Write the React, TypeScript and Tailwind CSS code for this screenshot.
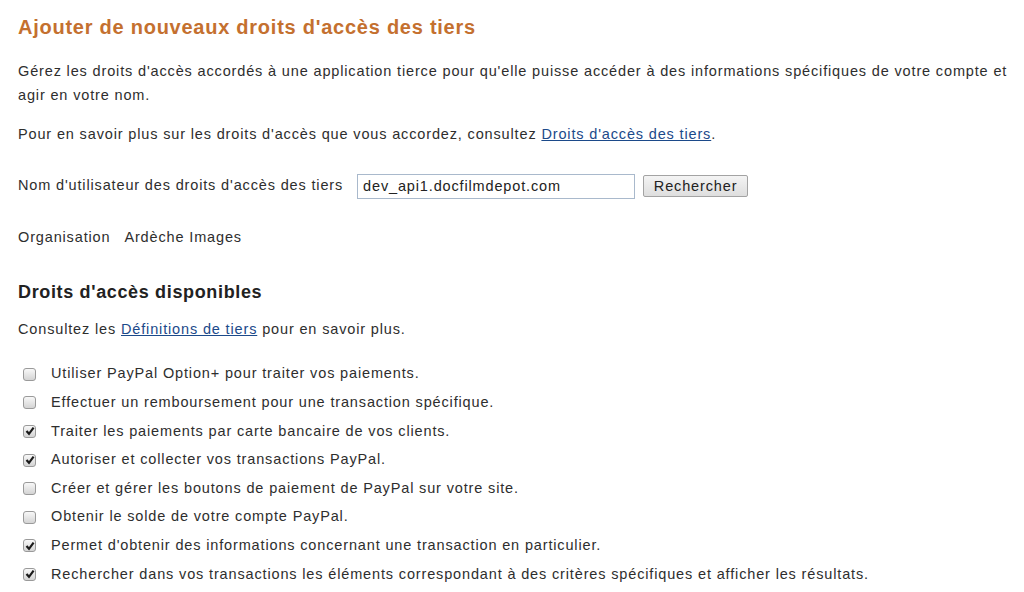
const items: [string, boolean][] = [
  ["Utiliser PayPal Option+ pour traiter vos paiements.", false],
  ["Effectuer un remboursement pour une transaction spécifique.", false],
  ["Traiter les paiements par carte bancaire de vos clients.", true],
  ["Autoriser et collecter vos transactions PayPal.", true],
  ["Créer et gérer les boutons de paiement de PayPal sur votre site.", false],
  ["Obtenir le solde de votre compte PayPal.", false],
  ["Permet d'obtenir des informations concernant une transaction en particulier.", true],
  ["Rechercher dans vos transactions les éléments correspondant à des critères spécifiques et afficher les résultats.", true],
  ["", false],
];

const CheckBox = ({ checked }: { checked: boolean }) => (
  <span className="w-[13px] h-[13px] rounded-[3px] border border-[#9a9a9a] bg-gradient-to-b from-[#f8f8f8] to-[#d4d4d4] flex items-center justify-center shrink-0">
    {checked && (
      <svg width="10" height="10" viewBox="0 0 10 10">
        <path d="M1.5 5 L4 7.8 L8.6 1.6" fill="none" stroke="#1a1a1a" strokeWidth="2.2" />
      </svg>
    )}
  </span>
);

export default function App() {
  return (
    <div className="w-[1024px] h-[592px] overflow-hidden bg-white text-[#2e2e2e] text-[14.5px] tracking-[0.85px] font-['Liberation_Sans',Arial,sans-serif] pl-[18px] pr-[4px] pt-[14px]">
      <h1 className="text-[20px] tracking-[0.75px] font-bold text-[#c4702f] leading-[26px]">
        Ajouter de nouveaux droits d'accès des tiers
      </h1>
      <p className="mt-[19px] leading-[24px]">
        Gérez les droits d'accès accordés à une application tierce pour qu'elle puisse accéder à des informations spécifiques de votre compte et agir en votre nom.
      </p>
      <p className="mt-[15px] leading-[24px]">
        Pour en savoir plus sur les droits d'accès que vous accordez, consultez{" "}
        <a className="text-[#1c4a8a] underline">Droits d'accès des tiers</a>.
      </p>
      <div className="mt-[27px] flex items-center h-[26px]">
        <span>Nom d'utilisateur des droits d'accès des tiers</span>
        <input
          className="ml-[14px] w-[278px] h-[25px] border border-[#a9b9cc] px-[5px] text-[14.5px] tracking-[0.85px] text-[#222] outline-none"
          defaultValue="dev_api1.docfilmdepot.com"
        />
        <button className="ml-[8px] w-[105px] h-[22px] border border-[#a3a3a3] rounded-[2px] bg-gradient-to-b from-[#f4f4f4] to-[#dedede] text-[14.5px] tracking-[0.85px] text-[#222]">
          Rechercher
        </button>
      </div>
      <div className="mt-[26px] flex gap-[14px] leading-[24px]">
        <span>Organisation</span>
        <span>Ardèche Images</span>
      </div>
      <h2 className="mt-[32px] text-[18px] tracking-[0.65px] font-bold text-[#222] leading-[22px]">
        Droits d'accès disponibles
      </h2>
      <p className="mt-[15px] leading-[22px]">
        Consultez les <a className="text-[#1c4a8a] underline">Définitions de tiers</a> pour en savoir plus.
      </p>
      <ul className="mt-[20px] pl-[5px]">
        {items.map(([label, checked], i) => (
          <li key={i} className="flex items-center gap-[15px] h-[28.6px]">
            <CheckBox checked={checked} />
            {label && <span>{label}</span>}
          </li>
        ))}
      </ul>
    </div>
  );
}
